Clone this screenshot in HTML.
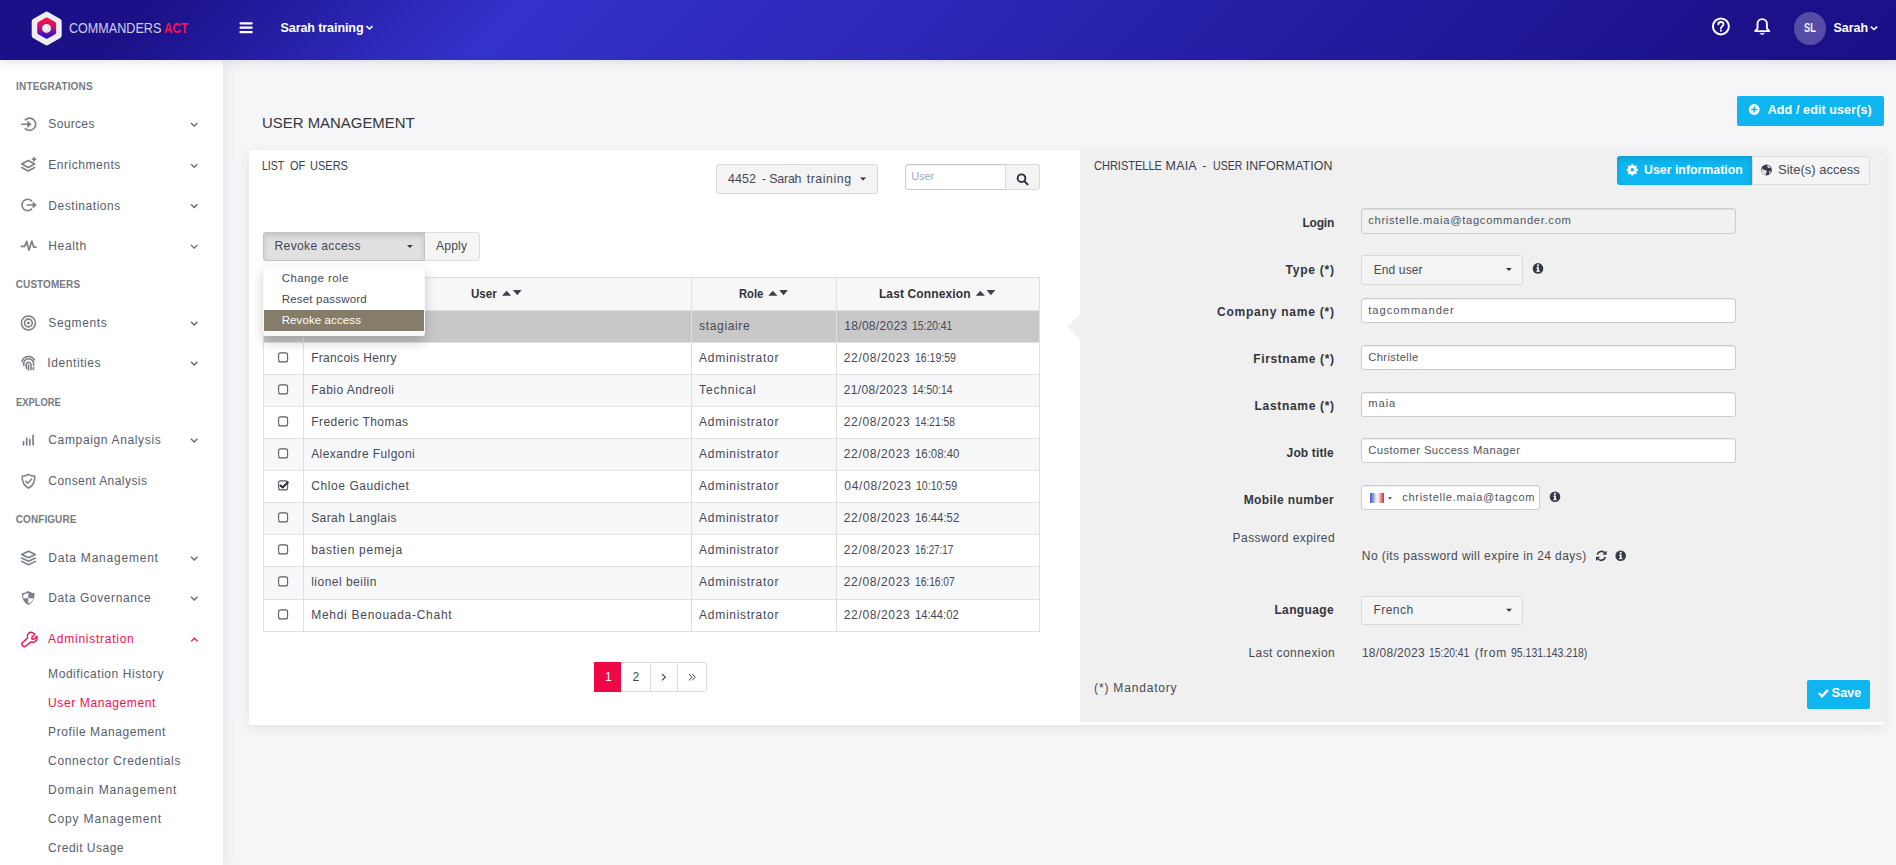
<!DOCTYPE html>
<html><head><meta charset="utf-8"><title>User Management</title>
<style>
*{box-sizing:border-box;margin:0;padding:0}
html,body{width:1896px;height:865px;overflow:hidden;background:#f6f6f8;font-family:"Liberation Sans",sans-serif;font-size:13px;color:#41444f}
.b{position:absolute}
.t{position:absolute;white-space:pre;line-height:1;transform-origin:0 0}
svg.ov{position:absolute;left:0;top:0;pointer-events:none;overflow:hidden}
</style></head><body>

<div class="b" style="left:249px;top:150px;width:1635px;height:575px;background:#fff;border-radius:3px;box-shadow:0 3px 12px rgba(60,60,90,.10)"></div>
<div class="b" style="left:1080px;top:150px;width:804px;height:572px;background:#f0f0f0;border-radius:0 3px 0 0"></div>
<div class="b" style="left:1737px;top:96px;width:147px;height:30px;background:#0eb5ef;border-radius:2px"></div>
<div class="b" style="left:716px;top:164px;width:162px;height:30px;background:#f4f4f4;border:1px solid #d9d9d9;border-radius:3px"></div>
<div class="b" style="left:905px;top:164px;width:101px;height:26px;background:#fff;border:1px solid #ccc;border-radius:3px 0 0 3px;box-shadow:inset 0 1px 1px rgba(0,0,0,.075)"></div>
<div class="b" style="left:1005px;top:164px;width:35px;height:26px;background:#f4f4f4;border:1px solid #d9d9d9;border-radius:0 3px 3px 0"></div>
<div class="b" style="left:424px;top:232px;width:56px;height:29px;background:#f5f5f5;border:1px solid #ddd;border-radius:0 3px 3px 0"></div>
<div class="b" style="left:263px;top:232px;width:162px;height:29px;background:#e0e0e0;border:1px solid #c2c2c2;border-radius:3px 0 0 3px;box-shadow:inset 0 3px 5px rgba(0,0,0,.125)"></div>
<div class="b" style="left:263px;top:277px;width:777px;height:355px;background:#fff"></div>
<div class="b" style="left:263px;top:278px;width:777px;height:32px;background:#f7f7f7"></div>
<div class="b" style="left:263px;top:311px;width:777px;height:31px;background:#c8c8c8"></div>
<div class="b" style="left:263px;top:375px;width:777px;height:31px;background:#f7f8fa"></div>
<div class="b" style="left:263px;top:439px;width:777px;height:31px;background:#f7f8fa"></div>
<div class="b" style="left:263px;top:503px;width:777px;height:31px;background:#f7f8fa"></div>
<div class="b" style="left:263px;top:567px;width:777px;height:32px;background:#f7f8fa"></div>
<div class="b" style="left:263px;top:277px;width:777px;height:1px;background:#ddd"></div>
<div class="b" style="left:263px;top:310px;width:777px;height:1px;background:#ddd"></div>
<div class="b" style="left:263px;top:342px;width:777px;height:1px;background:#e1e1e1"></div>
<div class="b" style="left:263px;top:374px;width:777px;height:1px;background:#e1e1e1"></div>
<div class="b" style="left:263px;top:406px;width:777px;height:1px;background:#e1e1e1"></div>
<div class="b" style="left:263px;top:438px;width:777px;height:1px;background:#e1e1e1"></div>
<div class="b" style="left:263px;top:470px;width:777px;height:1px;background:#e1e1e1"></div>
<div class="b" style="left:263px;top:502px;width:777px;height:1px;background:#e1e1e1"></div>
<div class="b" style="left:263px;top:534px;width:777px;height:1px;background:#e1e1e1"></div>
<div class="b" style="left:263px;top:566px;width:777px;height:1px;background:#e1e1e1"></div>
<div class="b" style="left:263px;top:599px;width:777px;height:1px;background:#e1e1e1"></div>
<div class="b" style="left:263px;top:631px;width:777px;height:1px;background:#e1e1e1"></div>
<div class="b" style="left:263px;top:277px;width:1px;height:355px;background:#e0e0e0"></div>
<div class="b" style="left:303px;top:277px;width:1px;height:355px;background:#e0e0e0"></div>
<div class="b" style="left:691px;top:277px;width:1px;height:355px;background:#e0e0e0"></div>
<div class="b" style="left:836px;top:277px;width:1px;height:355px;background:#e0e0e0"></div>
<div class="b" style="left:1039px;top:277px;width:1px;height:355px;background:#e0e0e0"></div>
<div class="b" style="left:594px;top:662px;width:113px;height:30px;background:#fff;border:1px solid #ddd;border-radius:2px"></div>
<div class="b" style="left:650px;top:662px;width:1px;height:30px;background:#ddd"></div>
<div class="b" style="left:677px;top:662px;width:1px;height:30px;background:#ddd"></div>
<div class="b" style="left:594px;top:662px;width:27px;height:30px;background:#ee0845;border-radius:0"></div>
<div class="b" style="left:263px;top:264px;width:162px;height:72px;background:#f9f9f9;border-radius:0 0 3px 3px;box-shadow:0 6px 12px rgba(0,0,0,.19)"></div>
<div class="b" style="left:264px;top:269px;width:160px;height:62px;background:#fff"></div>
<div class="b" style="left:264px;top:310px;width:160px;height:21px;background:#857d6a"></div>
<div class="b" style="left:1617px;top:156px;width:135px;height:29px;background:#0eb5ef;border-radius:3px 0 0 3px;box-shadow:inset 0 3px 5px rgba(0,0,0,.125)"></div>
<div class="b" style="left:1752px;top:156px;width:118px;height:29px;background:#f5f5f5;border:1px solid #ddd;border-radius:0 3px 3px 0"></div>
<div class="b" style="left:1361px;top:208px;width:375px;height:26px;background:#f1f1f1;border:1px solid #ccc;border-radius:3px;box-shadow:inset 0 1px 1px rgba(0,0,0,.075)"></div>
<div class="b" style="left:1361px;top:255px;width:162px;height:30px;background:#f4f4f4;border:1px solid #d9d9d9;border-radius:3px"></div>
<div class="b" style="left:1361px;top:298px;width:375px;height:25px;background:#fff;border:1px solid #ccc;border-radius:3px;box-shadow:inset 0 1px 1px rgba(0,0,0,.075)"></div>
<div class="b" style="left:1361px;top:345px;width:375px;height:25px;background:#fff;border:1px solid #ccc;border-radius:3px;box-shadow:inset 0 1px 1px rgba(0,0,0,.075)"></div>
<div class="b" style="left:1361px;top:392px;width:375px;height:25px;background:#fff;border:1px solid #ccc;border-radius:3px;box-shadow:inset 0 1px 1px rgba(0,0,0,.075)"></div>
<div class="b" style="left:1361px;top:438px;width:375px;height:25px;background:#fff;border:1px solid #ccc;border-radius:3px;box-shadow:inset 0 1px 1px rgba(0,0,0,.075)"></div>
<div class="b" style="left:1361px;top:485px;width:179px;height:25px;background:#fff;border:1px solid #ccc;border-radius:3px;box-shadow:inset 0 1px 1px rgba(0,0,0,.075)"></div>
<div class="b" style="left:1361px;top:596px;width:162px;height:29px;background:#f4f4f4;border:1px solid #d9d9d9;border-radius:3px"></div>
<div class="b" style="left:1807px;top:680px;width:63px;height:29px;background:#0eb5ef;border-radius:2px"></div>
<div class="b" style="left:0px;top:60px;width:223px;height:805px;background:#fff;box-shadow:2px 0 12px rgba(70,70,110,.10)"></div>
<div class="b" style="left:0px;top:0px;width:1896px;height:60px;background:linear-gradient(135deg,#1b1087 0%,#1b1087 8%,#3432cc 27%,#1c118a 90%,#1b1087 100%);box-shadow:0 2px 10px rgba(40,40,90,.13)"></div>
<div class="b" style="left:1794px;top:12px;width:32px;height:33px;background:rgba(255,255,255,.25);border-radius:50%"></div>
<span class="t" style="left:262.14px;top:114.90px;font-size:15.5px;color:#33363f;transform:scaleX(0.9633)">USER MANAGEMENT</span>
<span class="t" style="left:1767.70px;top:103.80px;font-size:12.6px;color:#fff;font-weight:700;letter-spacing:0.067px">Add / edit user(s)</span>
<span class="t" style="left:262.25px;top:159.80px;font-size:12.4px;color:#3b3e47;transform:scaleX(0.8516)">LIST</span>
<span class="t" style="left:289.80px;top:159.80px;font-size:12.4px;color:#3b3e47;transform:scaleX(0.8845)">OF</span>
<span class="t" style="left:309.70px;top:159.80px;font-size:12.4px;color:#3b3e47;transform:scaleX(0.8886)">USERS</span>
<span class="t" style="left:727.90px;top:173.20px;font-size:12.4px;color:#464955;letter-spacing:0.142px">4452</span>
<span class="t" style="left:761.70px;top:173.20px;font-size:12.4px;color:#464955">-</span>
<span class="t" style="left:769.30px;top:173.20px;font-size:12.4px;color:#464955;letter-spacing:-0.218px">Sarah</span>
<span class="t" style="left:806.70px;top:173.20px;font-size:12.4px;color:#464955;letter-spacing:0.550px">training</span>
<span class="t" style="left:911.30px;top:171.00px;font-size:11px;color:#a3a8bc;letter-spacing:-0.121px">User</span>
<span class="t" style="left:274.50px;top:240.00px;font-size:12.1px;color:#464955;letter-spacing:0.337px">Revoke access</span>
<span class="t" style="left:435.90px;top:240.00px;font-size:12.1px;color:#464955;letter-spacing:0.224px">Apply</span>
<span class="t" style="left:471.40px;top:287.90px;font-size:12px;color:#30333c;font-weight:700;transform:scaleX(0.9625)">User</span>
<span class="t" style="left:738.50px;top:287.90px;font-size:12px;color:#30333c;font-weight:700;transform:scaleX(0.9305)">Role</span>
<span class="t" style="left:878.90px;top:287.90px;font-size:12px;color:#30333c;font-weight:700;letter-spacing:0.133px">Last Connexion</span>
<span class="t" style="left:699.10px;top:320.00px;font-size:12px;color:#464955;letter-spacing:0.652px">stagiaire</span>
<span class="t" style="left:844.30px;top:320.00px;font-size:12px;color:#464955;letter-spacing:0.302px">18/08/2023</span>
<span class="t" style="left:911.90px;top:320.00px;font-size:12px;color:#464955;transform:scaleX(0.8631)">15:20:41</span>
<span class="t" style="left:311.20px;top:352.00px;font-size:12px;color:#464955;letter-spacing:0.303px">Francois Henry</span>
<span class="t" style="left:699.10px;top:352.00px;font-size:12px;color:#464955;letter-spacing:0.717px">Administrator</span>
<span class="t" style="left:843.80px;top:352.00px;font-size:12px;color:#464955;letter-spacing:0.646px">22/08/2023</span>
<span class="t" style="left:914.50px;top:352.00px;font-size:12px;color:#464955;transform:scaleX(0.8759)">16:19:59</span>
<span class="t" style="left:311.20px;top:384.00px;font-size:12px;color:#464955;letter-spacing:0.468px">Fabio Andreoli</span>
<span class="t" style="left:699.10px;top:384.00px;font-size:12px;color:#464955;letter-spacing:0.817px">Technical</span>
<span class="t" style="left:843.80px;top:384.00px;font-size:12px;color:#464955;letter-spacing:0.357px">21/08/2023</span>
<span class="t" style="left:911.60px;top:384.00px;font-size:12px;color:#464955;transform:scaleX(0.8695)">14:50:14</span>
<span class="t" style="left:311.20px;top:416.00px;font-size:12px;color:#464955;letter-spacing:0.458px">Frederic Thomas</span>
<span class="t" style="left:699.10px;top:416.00px;font-size:12px;color:#464955;letter-spacing:0.717px">Administrator</span>
<span class="t" style="left:843.80px;top:416.00px;font-size:12px;color:#464955;letter-spacing:0.646px">22/08/2023</span>
<span class="t" style="left:914.50px;top:416.00px;font-size:12px;color:#464955;transform:scaleX(0.8546)">14:21:58</span>
<span class="t" style="left:311.20px;top:448.00px;font-size:12px;color:#464955;letter-spacing:0.421px">Alexandre Fulgoni</span>
<span class="t" style="left:699.10px;top:448.00px;font-size:12px;color:#464955;letter-spacing:0.717px">Administrator</span>
<span class="t" style="left:843.80px;top:448.00px;font-size:12px;color:#464955;letter-spacing:0.646px">22/08/2023</span>
<span class="t" style="left:914.50px;top:448.00px;font-size:12px;color:#464955;transform:scaleX(0.9503)">16:08:40</span>
<span class="t" style="left:311.20px;top:480.00px;font-size:12px;color:#464955;letter-spacing:0.589px">Chloe Gaudichet</span>
<span class="t" style="left:699.10px;top:480.00px;font-size:12px;color:#464955;letter-spacing:0.717px">Administrator</span>
<span class="t" style="left:844.30px;top:480.00px;font-size:12px;color:#464955;letter-spacing:0.724px">04/08/2023</span>
<span class="t" style="left:915.70px;top:480.00px;font-size:12px;color:#464955;transform:scaleX(0.8780)">10:10:59</span>
<span class="t" style="left:311.20px;top:512.00px;font-size:12px;color:#464955;letter-spacing:0.403px">Sarah Langlais</span>
<span class="t" style="left:699.10px;top:512.00px;font-size:12px;color:#464955;letter-spacing:0.717px">Administrator</span>
<span class="t" style="left:843.80px;top:512.00px;font-size:12px;color:#464955;letter-spacing:0.646px">22/08/2023</span>
<span class="t" style="left:914.50px;top:512.00px;font-size:12px;color:#464955;transform:scaleX(0.9461)">16:44:52</span>
<span class="t" style="left:311.20px;top:544.00px;font-size:12px;color:#464955;letter-spacing:0.737px">bastien pemeja</span>
<span class="t" style="left:699.10px;top:544.00px;font-size:12px;color:#464955;letter-spacing:0.717px">Administrator</span>
<span class="t" style="left:843.80px;top:544.00px;font-size:12px;color:#464955;letter-spacing:0.646px">22/08/2023</span>
<span class="t" style="left:914.50px;top:544.00px;font-size:12px;color:#464955;transform:scaleX(0.8185)">16:27:17</span>
<span class="t" style="left:311.20px;top:576.00px;font-size:12px;color:#464955;letter-spacing:0.483px">lionel beilin</span>
<span class="t" style="left:699.10px;top:576.00px;font-size:12px;color:#464955;letter-spacing:0.717px">Administrator</span>
<span class="t" style="left:843.80px;top:576.00px;font-size:12px;color:#464955;letter-spacing:0.646px">22/08/2023</span>
<span class="t" style="left:914.50px;top:576.00px;font-size:12px;color:#464955;transform:scaleX(0.8504)">16:16:07</span>
<span class="t" style="left:311.20px;top:609.00px;font-size:12px;color:#464955;letter-spacing:0.720px">Mehdi Benouada-Chaht</span>
<span class="t" style="left:699.10px;top:609.00px;font-size:12px;color:#464955;letter-spacing:0.717px">Administrator</span>
<span class="t" style="left:843.80px;top:609.00px;font-size:12px;color:#464955;letter-spacing:0.646px">22/08/2023</span>
<span class="t" style="left:914.50px;top:609.00px;font-size:12px;color:#464955;transform:scaleX(0.9354)">14:44:02</span>
<span class="t" style="left:605.00px;top:671.00px;font-size:12px;color:#fff">1</span>
<span class="t" style="left:632.40px;top:671.00px;font-size:12px;color:#464955">2</span>
<span class="t" style="left:281.70px;top:273.00px;font-size:11.5px;color:#464955;letter-spacing:0.404px">Change role</span>
<span class="t" style="left:281.70px;top:293.90px;font-size:11.5px;color:#464955;letter-spacing:0.196px">Reset password</span>
<span class="t" style="left:281.70px;top:314.80px;font-size:11.5px;color:#fff;letter-spacing:0.106px">Revoke access</span>
<span class="t" style="left:1093.90px;top:159.90px;font-size:12.4px;color:#3b3e47;transform:scaleX(0.8888)">CHRISTELLE</span>
<span class="t" style="left:1165.60px;top:159.90px;font-size:12.4px;color:#3b3e47;letter-spacing:0.224px">MAIA</span>
<span class="t" style="left:1202.20px;top:159.90px;font-size:12.4px;color:#3b3e47">-</span>
<span class="t" style="left:1212.50px;top:159.90px;font-size:12.4px;color:#3b3e47;transform:scaleX(0.8527)">USER</span>
<span class="t" style="left:1245.80px;top:159.90px;font-size:12.4px;color:#3b3e47;letter-spacing:0.084px">INFORMATION</span>
<span class="t" style="left:1643.50px;top:162.90px;font-size:13px;color:#fff;font-weight:700;transform:scaleX(0.9503)">User information</span>
<span class="t" style="left:1778.00px;top:162.90px;font-size:13px;color:#464955;letter-spacing:0.005px">Site(s) access</span>
<span class="t" style="left:1302.40px;top:217.00px;font-size:12px;color:#32353d;font-weight:700;letter-spacing:-0.181px">Login</span>
<span class="t" style="left:1368.20px;top:215.00px;font-size:11.2px;color:#50535c;letter-spacing:0.697px">christelle.maia@tagcommander.com</span>
<span class="t" style="left:1285.60px;top:264.00px;font-size:12px;color:#32353d;font-weight:700;letter-spacing:0.755px">Type (*)</span>
<span class="t" style="left:1373.70px;top:264.10px;font-size:12px;color:#464955;letter-spacing:0.124px">End user</span>
<span class="t" style="left:1217.00px;top:305.80px;font-size:12px;color:#32353d;font-weight:700;letter-spacing:0.776px">Company name (*)</span>
<span class="t" style="left:1368.20px;top:305.00px;font-size:11.2px;color:#50535c;letter-spacing:1.001px">tagcommander</span>
<span class="t" style="left:1253.30px;top:352.90px;font-size:12px;color:#32353d;font-weight:700;letter-spacing:0.612px">Firstname (*)</span>
<span class="t" style="left:1368.20px;top:351.90px;font-size:11.2px;color:#50535c;letter-spacing:0.388px">Christelle</span>
<span class="t" style="left:1254.60px;top:399.90px;font-size:12px;color:#32353d;font-weight:700;letter-spacing:0.671px">Lastname (*)</span>
<span class="t" style="left:1368.20px;top:398.10px;font-size:11.2px;color:#50535c;letter-spacing:0.958px">maia</span>
<span class="t" style="left:1286.60px;top:446.90px;font-size:12px;color:#32353d;font-weight:700;letter-spacing:0.134px">Job title</span>
<span class="t" style="left:1368.20px;top:445.00px;font-size:11.2px;color:#50535c;letter-spacing:0.460px">Customer Success Manager</span>
<span class="t" style="left:1243.70px;top:493.90px;font-size:12px;color:#32353d;font-weight:700;letter-spacing:0.386px">Mobile number</span>
<span class="t" style="left:1402.30px;top:492.00px;font-size:11px;color:#50535c;letter-spacing:0.696px">christelle.maia@tagcom</span>
<span class="t" style="left:1232.60px;top:531.70px;font-size:12px;color:#464955;letter-spacing:0.446px">Password expired</span>
<span class="t" style="left:1361.80px;top:550.00px;font-size:12px;color:#464955;letter-spacing:0.436px">No (its password will expire in 24 days)</span>
<span class="t" style="left:1274.40px;top:604.10px;font-size:12px;color:#32353d;font-weight:700;letter-spacing:0.372px">Language</span>
<span class="t" style="left:1373.50px;top:604.20px;font-size:12px;color:#464955;letter-spacing:0.445px">French</span>
<span class="t" style="left:1248.50px;top:646.60px;font-size:12px;color:#464955;letter-spacing:0.419px">Last connexion</span>
<span class="t" style="left:1361.90px;top:646.70px;font-size:12px;color:#464955;letter-spacing:0.302px">18/08/2023</span>
<span class="t" style="left:1429.40px;top:646.70px;font-size:12px;color:#464955;transform:scaleX(0.8631)">15:20:41</span>
<span class="t" style="left:1474.80px;top:646.70px;font-size:12px;color:#464955;letter-spacing:0.850px">(from</span>
<span class="t" style="left:1510.50px;top:646.70px;font-size:12px;color:#464955;transform:scaleX(0.8729)">95.131.143.218)</span>
<span class="t" style="left:1094.10px;top:682.00px;font-size:12px;color:#464955;letter-spacing:0.817px">(*) Mandatory</span>
<span class="t" style="left:1831.60px;top:685.90px;font-size:13px;color:#fff;font-weight:700;letter-spacing:-0.277px">Save</span>
<span class="t" style="left:16.10px;top:81.90px;font-size:10px;color:#767b84;font-weight:700;letter-spacing:0.150px">INTEGRATIONS</span>
<span class="t" style="left:15.80px;top:280.30px;font-size:10px;color:#767b84;font-weight:700;letter-spacing:0.070px">CUSTOMERS</span>
<span class="t" style="left:15.80px;top:398.30px;font-size:10px;color:#767b84;font-weight:700;transform:scaleX(0.9352)">EXPLORE</span>
<span class="t" style="left:15.80px;top:515.40px;font-size:10px;color:#767b84;font-weight:700;letter-spacing:0.071px">CONFIGURE</span>
<span class="t" style="left:48.30px;top:118.20px;font-size:12px;color:#585d6b;letter-spacing:0.346px">Sources</span>
<span class="t" style="left:48.30px;top:159.30px;font-size:12px;color:#585d6b;letter-spacing:0.531px">Enrichments</span>
<span class="t" style="left:48.30px;top:199.50px;font-size:12px;color:#585d6b;letter-spacing:0.542px">Destinations</span>
<span class="t" style="left:48.30px;top:240.10px;font-size:12px;color:#585d6b;letter-spacing:0.637px">Health</span>
<span class="t" style="left:48.30px;top:317.00px;font-size:12px;color:#585d6b;letter-spacing:0.624px">Segments</span>
<span class="t" style="left:47.30px;top:357.00px;font-size:12px;color:#585d6b;letter-spacing:0.586px">Identities</span>
<span class="t" style="left:48.30px;top:434.00px;font-size:12px;color:#585d6b;letter-spacing:0.649px">Campaign Analysis</span>
<span class="t" style="left:48.30px;top:475.10px;font-size:12px;color:#585d6b;letter-spacing:0.439px">Consent Analysis</span>
<span class="t" style="left:48.30px;top:552.00px;font-size:12px;color:#585d6b;letter-spacing:0.779px">Data Management</span>
<span class="t" style="left:48.30px;top:592.00px;font-size:12px;color:#585d6b;letter-spacing:0.601px">Data Governance</span>
<span class="t" style="left:48.10px;top:633.20px;font-size:12px;color:#ef0f50;letter-spacing:0.742px">Administration</span>
<span class="t" style="left:48.10px;top:668.00px;font-size:12px;color:#585d6b;letter-spacing:0.558px">Modification History</span>
<span class="t" style="left:48.10px;top:697.00px;font-size:12px;color:#ef0f50;letter-spacing:0.609px">User Management</span>
<span class="t" style="left:48.10px;top:726.10px;font-size:12px;color:#585d6b;letter-spacing:0.579px">Profile Management</span>
<span class="t" style="left:48.10px;top:755.00px;font-size:12px;color:#585d6b;letter-spacing:0.645px">Connector Credentials</span>
<span class="t" style="left:48.10px;top:784.00px;font-size:12px;color:#585d6b;letter-spacing:0.844px">Domain Management</span>
<span class="t" style="left:48.10px;top:813.00px;font-size:12px;color:#585d6b;letter-spacing:0.825px">Copy Management</span>
<span class="t" style="left:48.10px;top:841.70px;font-size:12px;color:#585d6b;letter-spacing:0.486px">Credit Usage</span>
<span class="t" style="left:68.50px;top:21.20px;font-size:14.3px;color:rgba(255,255,255,.8);transform:scaleX(0.8801)">COMMANDERS</span>
<span class="t" style="left:163.80px;top:21.20px;font-size:14.3px;color:#f5134d;font-weight:700;transform:scaleX(0.8263)">ACT</span>
<span class="t" style="left:280.50px;top:22.10px;font-size:12.5px;color:#fff;font-weight:700;letter-spacing:-0.078px">Sarah training</span>
<span class="t" style="left:1803.80px;top:22.00px;font-size:12.6px;color:#f4f3fa;font-weight:700;transform:scaleX(0.7439)">SL</span>
<span class="t" style="left:1833.40px;top:22.00px;font-size:12.5px;color:#fff;font-weight:700">Sarah</span>
<svg class="ov" width="1896" height="865" viewBox="0 0 1896 865" style="z-index:20">

<path d="M1080.5 313.5 L1067.5 327 L1080.5 340.5 Z" fill="#f0f0f0"/>
<circle cx="1754.200" cy="109.500" r="5.400" fill="#fff"/><path d="M1751.200 109.500h6M1754.200 106.500v6" stroke="#0eb5ef" stroke-width="1.600" fill="none"/>
<path d="M860 177.5h6.2l-3.1 3z" fill="#333"/>
<circle cx="1021.500" cy="178.200" r="3.850" fill="none" stroke="#2c3142" stroke-width="1.900"/><path d="M1024.400 181.200l3.200 3.200" stroke="#2c3142" stroke-width="2" stroke-linecap="round"/>
<path d="M407 245h5.8l-2.9 2.9z" fill="#333"/>
<path d="M502 295.800l4.600-5 4.600 5z M512.9 290.100h8.700l-4.350 5.100z" fill="#3d414c"/>
<path d="M768.3 295.800l4.600-5 4.600 5z M779.1999999999999 290.100h8.700l-4.350 5.100z" fill="#3d414c"/>
<path d="M975.7 295.800l4.600-5 4.600 5z M986.6 290.100h8.700l-4.350 5.100z" fill="#3d414c"/>
<rect x="278.6" y="352.9" width="9" height="9" rx="2" fill="#fff" stroke="#595c68" stroke-width="1.1"/>
<rect x="278.6" y="384.9" width="9" height="9" rx="2" fill="#fff" stroke="#595c68" stroke-width="1.1"/>
<rect x="278.6" y="416.9" width="9" height="9" rx="2" fill="#fff" stroke="#595c68" stroke-width="1.1"/>
<rect x="278.6" y="448.9" width="9" height="9" rx="2" fill="#fff" stroke="#595c68" stroke-width="1.1"/>
<rect x="278.6" y="480.9" width="9" height="9" rx="2" fill="#fff" stroke="#595c68" stroke-width="1.1"/>
<path d="M279.8 485.0L282.7 487.4L288.3 481.8" fill="none" stroke="#2b2e3b" stroke-width="2.1"/>
<rect x="278.6" y="512.9" width="9" height="9" rx="2" fill="#fff" stroke="#595c68" stroke-width="1.1"/>
<rect x="278.6" y="544.9" width="9" height="9" rx="2" fill="#fff" stroke="#595c68" stroke-width="1.1"/>
<rect x="278.6" y="576.9" width="9" height="9" rx="2" fill="#fff" stroke="#595c68" stroke-width="1.1"/>
<rect x="278.6" y="609.9" width="9" height="9" rx="2" fill="#fff" stroke="#595c68" stroke-width="1.1"/>
<path d="M662 674l3.3 3.2-3.3 3.2" fill="none" stroke="#444" stroke-width="1.1"/>
<path d="M689 674l3 3.2-3 3.2M692.2 674l3 3.2-3 3.2" fill="none" stroke="#444" stroke-width="1"/>
<path d="M1631.18 165.44 L1631.32 164.18 L1633.28 164.18 L1633.42 165.44 L1634.59 165.93 L1635.58 165.14 L1636.96 166.52 L1636.17 167.51 L1636.66 168.68 L1637.92 168.82 L1637.92 170.78 L1636.66 170.92 L1636.17 172.09 L1636.96 173.08 L1635.58 174.46 L1634.59 173.67 L1633.42 174.16 L1633.28 175.42 L1631.32 175.42 L1631.18 174.16 L1630.01 173.67 L1629.02 174.46 L1627.64 173.08 L1628.43 172.09 L1627.94 170.92 L1626.68 170.78 L1626.68 168.82 L1627.94 168.68 L1628.43 167.51 L1627.64 166.52 L1629.02 165.14 L1630.01 165.93Z" fill="#fff"/><circle cx="1632.3" cy="169.8" r="1.8" fill="#0eb5ef"/>
<circle cx="1766.5" cy="170" r="5.4" fill="#363a47"/><path d="M1763.2 166.6c1.6-.4 2.6 .4 2.9 1.6c.3 1.2-.9 1.6-.6 2.8c.3 1 1.3 1.2 1.1 2.6c-.1 .7-.7 1.2-1.3 1.4c-1.9-.5-3.6-2.4-3.8-4.7c.2-1.6 .8-2.9 1.700-3.700z" fill="#f5f5f5" opacity=".0"/><path d="M1767.500 165.200c1.300 .3 2.400 1.100 3.100 2.200l-1.500 .9-1.800-1.200zM1769 171.500l1.800-.6c-.2 1.200-.8 2.200-1.600 3z" fill="#f5f5f5" opacity=".9"/><path d="M1762 168.400l2.200 1.500 1.900 .3 .9 1.800-1.200 1.400v1.800c-2.200-.3-4-2.200-4.300-4.500z" fill="#f5f5f5" opacity=".9"/>
<path d="M1506 268h5.800l-2.900 2.900z" fill="#333"/>
<defs><linearGradient id="fl" x1="0" y1="0" x2="1" y2="0"><stop offset="0" stop-color="#3a52b6"/><stop offset=".3" stop-color="#a9b4e0"/><stop offset=".42" stop-color="#ececf1"/><stop offset=".6" stop-color="#ececf1"/><stop offset=".72" stop-color="#f0a5a0"/><stop offset="1" stop-color="#df261d"/></linearGradient></defs><rect x="1370.100" y="493" width="13.900" height="9.900" fill="url(#fl)"/><path d="M1388 497.200h4l-2 2.300z" fill="#444"/>
<path d="M1506.200 608.800h5.800l-2.900 2.900z" fill="#333"/>
<path d="M1818.800 693l3.300 3.300 5.800-6.400" fill="none" stroke="#fff" stroke-width="2.400"/>
<circle cx="1538" cy="268.4" r="5.3" fill="#363a47"/><rect x="1537.1" y="267.2" width="1.900" height="4.300" fill="#f0f0f0"/><rect x="1536.4" y="267.2" width="1.600" height="1.100" fill="#f0f0f0"/><rect x="1536.3" y="270.7" width="3.500" height="1.100" fill="#f0f0f0"/><circle cx="1538" cy="265.4" r="1.100" fill="#f0f0f0"/>
<circle cx="1555" cy="496.8" r="5.3" fill="#363a47"/><rect x="1554.1" y="495.6" width="1.900" height="4.300" fill="#f0f0f0"/><rect x="1553.4" y="495.6" width="1.600" height="1.100" fill="#f0f0f0"/><rect x="1553.3" y="499.1" width="3.500" height="1.100" fill="#f0f0f0"/><circle cx="1555" cy="493.8" r="1.100" fill="#f0f0f0"/>
<circle cx="1620.7" cy="555.8" r="5.3" fill="#363a47"/><rect x="1619.8" y="554.5999999999999" width="1.900" height="4.300" fill="#f0f0f0"/><rect x="1619.1000000000001" y="554.5999999999999" width="1.600" height="1.100" fill="#f0f0f0"/><rect x="1619.0" y="558.0999999999999" width="3.500" height="1.100" fill="#f0f0f0"/><circle cx="1620.7" cy="552.8" r="1.100" fill="#f0f0f0"/>
<path d="M1597.300 554.600a4.300 4.300 0 0 1 7.400-1.800M1605.300 557a4.300 4.300 0 0 1-7.400 1.800" fill="none" stroke="#363a47" stroke-width="1.700"/><path d="M1606.600 550.600v4.200h-4.200zM1596 561v-4.200h4.200z" fill="#363a47"/>
<path d="M191 123.0l3.200 3.200 3.200-3.200" fill="none" stroke="#5f6470" stroke-width="1.300"/>
<path d="M191 164.1l3.200 3.200 3.200-3.200" fill="none" stroke="#5f6470" stroke-width="1.300"/>
<path d="M191 204.3l3.200 3.200 3.200-3.200" fill="none" stroke="#5f6470" stroke-width="1.300"/>
<path d="M191 244.9l3.200 3.200 3.200-3.200" fill="none" stroke="#5f6470" stroke-width="1.300"/>
<path d="M191 321.8l3.200 3.200 3.200-3.200" fill="none" stroke="#5f6470" stroke-width="1.300"/>
<path d="M191 361.8l3.200 3.200 3.200-3.200" fill="none" stroke="#5f6470" stroke-width="1.300"/>
<path d="M191 438.8l3.200 3.200 3.200-3.200" fill="none" stroke="#5f6470" stroke-width="1.300"/>
<path d="M191 556.8l3.200 3.200 3.200-3.200" fill="none" stroke="#5f6470" stroke-width="1.300"/>
<path d="M191 596.8l3.200 3.200 3.200-3.200" fill="none" stroke="#5f6470" stroke-width="1.300"/>
<path d="M191.200 641.400l3.200-3.200 3.200 3.200" fill="none" stroke="#ef0f50" stroke-width="1.300"/>
<path d="M25.300 119.900a6.100 6.100 0 1 1 0 8.700M21.600 124.300h8.600" fill="none" stroke="#7b8089" stroke-width="1.6" stroke-linecap="round" stroke-linejoin="round" />
<path d="M27.600 121.300l3.600 3-3.600 3z" fill="#7b8089" stroke="#7b8089" stroke-width=".8" stroke-linejoin="round"/>
<path d="M28.200 160.500l6.500 3.500-6.500 3.500-6.500-3.500zM21.700 167.500l6.500 3.500 6.500-3.500M34 157.500v3.400M32.300 159.200h3.400" fill="none" stroke="#7b8089" stroke-width="1.6" stroke-linecap="round" stroke-linejoin="round" />
<path d="M31.600 200.900a5.700 5.700 0 1 0 0 8.200M27.200 205h6.500" fill="none" stroke="#7b8089" stroke-width="1.6" stroke-linecap="round" stroke-linejoin="round" />
<path d="M33 202.200l3.400 2.800-3.400 2.800z" fill="#7b8089" stroke="#7b8089" stroke-width=".8" stroke-linejoin="round"/>
<path d="M21.300 246.400h3.300l2.100-5 2.300 8.800 2.800-9.200 2 6.200h2.100" fill="none" stroke="#7b8089" stroke-width="1.7" stroke-linecap="round" stroke-linejoin="round" />
<circle cx="28.400" cy="323" r="7" fill="none" stroke="#7b8089" stroke-width="1.600"/><circle cx="28.400" cy="323" r="3.900" fill="none" stroke="#7b8089" stroke-width="1.600"/><circle cx="28.400" cy="323" r="1.500" fill="#7b8089"/>
<path d="M22 361.500a6.800 6.800 0 0 1 12.500-1.500M23.800 365.500c-.8-4 1.500-6.800 4.700-6.800s5.500 2.800 5.200 6.500M26.500 368.500c-.5-2.500-.8-6.300 2-6.300s2.800 3.800 2.400 7.500M28.500 365v5M33.500 367.500l-.3 2" fill="none" stroke="#7b8089" stroke-width="1.6" stroke-linecap="round" stroke-linejoin="round" />
<path d="M23.500 444.800v-3.300M26.700 444.800v-6.500M29.800 444.800v-5.100M33.100 444.800v-9.500" fill="none" stroke="#7b8089" stroke-width="1.7" stroke-linecap="round" stroke-linejoin="round" />
<path d="M28.500 474.300c2 1.300 4.200 1.900 6.300 2 .2 5.500-2 9.700-6.300 11.800-4.300-2.100-6.500-6.300-6.300-11.800 2.100-.1 4.300-.7 6.300-2zM25.700 481.200l2 2 3.800-4" fill="none" stroke="#7b8089" stroke-width="1.6" stroke-linecap="round" stroke-linejoin="round" />
<path d="M28.500 551.200l6.800 3.300-6.800 3.300-6.800-3.300zM21.700 558l6.800 3.300 6.800-3.300M21.700 561.400l6.800 3.300 6.800-3.300" fill="none" stroke="#7b8089" stroke-width="1.6" stroke-linecap="round" stroke-linejoin="round" />
<path d="M28.300 591c2 1.300 4.200 2 6.300 2.100 .2 5.500-2 9.800-6.300 11.900-4.300-2.100-6.500-6.400-6.300-11.900 2.100-.1 4.300-.8 6.300-2.100z" fill="#7b8089"/><path d="M28.300 592.800v5.400h-5c0-1.200 0-2.400 .1-3.700 1.700-.2 3.400-.8 4.900-1.700zM28.300 598.200h5c-.3 2.200-1.800 3.900-5 5.300z" fill="#fff"/>
<path d="M34.800 634.300l-3 3 .2 1.800 1.800 .2 3-3c.8 2.300-.2 4.300-1.800 5.300-1.300 .8-2.800 .8-4 .3l-5.200 4.100c-1 .8-2.400 .7-3.200-.2-.9-.9-.8-2.300 .1-3.200l4.800-4.700c-.5-1.500-.2-3.200 1-4.500 1.500-1.500 3.800-1.800 6.300 .9z" fill="none" stroke="#ef0f50" stroke-width="1.4" stroke-linecap="round" stroke-linejoin="round" />
<defs><linearGradient id="lg" x1="0" y1="0" x2="0" y2="1"><stop offset="0" stop-color="#fb1247"/><stop offset=".45" stop-color="#c4127a"/><stop offset="1" stop-color="#2a0fc4"/></linearGradient><radialGradient id="rg" cx=".4" cy=".4" r=".7"><stop offset="0" stop-color="#fff"/><stop offset="1" stop-color="#cfcfd8"/></radialGradient></defs>
<path d="M46.70 14.30 L59.00 21.40 L59.00 35.60 L46.70 42.70 L34.40 35.60 L34.40 21.40Z" fill="#efeef3" stroke="#efeef3" stroke-width="5.400" stroke-linejoin="round"/>
<path d="M46.70 19.50 L54.15 23.80 L54.15 32.40 L46.70 36.70 L39.25 32.40 L39.25 23.80Z" fill="url(#lg)" stroke="url(#lg)" stroke-width="4" stroke-linejoin="round"/>
<circle cx="46.600" cy="28.400" r="4.500" fill="url(#rg)"/>
<rect x="239.500" y="22.2" width="13.200" height="2.200" rx=".8" fill="#fff"/>
<rect x="239.500" y="26.6" width="13.200" height="2.200" rx=".8" fill="#fff"/>
<rect x="239.500" y="31.0" width="13.200" height="2.200" rx=".8" fill="#fff"/>
<path d="M366.500 26.200l3 2.800 3-2.800" fill="none" stroke="#fff" stroke-width="1.600"/>
<path d="M1870.800 26.600l3.200 2.900 3.200-2.900" fill="none" stroke="#fff" stroke-width="1.600"/>
<circle cx="1720.900" cy="26.450" r="7.950" fill="none" stroke="#fff" stroke-width="2"/><path d="M1718.300 24.400c0-1.500 1.100-2.400 2.600-2.400s2.600 .9 2.600 2.300c0 1.900-2.600 2-2.600 4.200" fill="none" stroke="#fff" stroke-width="1.800" stroke-linecap="round"/><circle cx="1720.900" cy="30.700" r="1.050" fill="#fff"/>
<path d="M1755.200 31.100L1757.500 28.400V23.800a4.700 4.700 0 0 1 9.400 0V28.400L1769.300 31.100Z" fill="none" stroke="#fff" stroke-width="1.900" stroke-linejoin="round"/><path d="M1759.700 33.300h5l-2.500 1.500z" fill="#fff" stroke="#fff" stroke-width=".5" stroke-linejoin="round"/>
</svg>
</body></html>
